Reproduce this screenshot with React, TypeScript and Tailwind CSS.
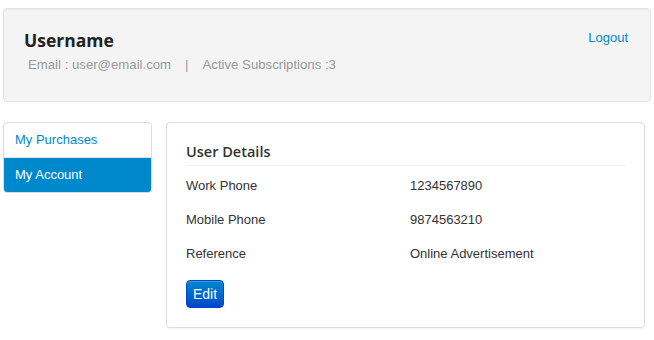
export default function App() {
  const rows = [
    { label: "Work Phone", value: "1234567890" },
    { label: "Mobile Phone", value: "9874563210" },
    { label: "Reference", value: "Online Advertisement" },
  ];

  return (
    <div className="min-h-[340px] bg-white px-[3px] pt-[8px] text-[13px] text-[#333] font-['Liberation_Sans',Arial,sans-serif]">
      <div className="flex h-[94px] items-start justify-between rounded-[4px] border border-[#e3e3e3] bg-[#f4f4f4] pl-[20px] pr-[22px] pt-[19px] shadow-[inset_0_1px_1px_rgba(0,0,0,0.05)]">
        <div>
          <h2 className="font-['Open_Sans',sans-serif] text-[17.5px] font-bold leading-[24px] text-[#222]">
            Username
          </h2>
          <p className="mt-[4px] pl-[4px] text-[13.2px] leading-[18px] text-[#999]">
            Email : user@email.com<span className="px-[14px]">|</span>Active Subscriptions :3
          </p>
        </div>
        <a href="#" className="mt-[0px] text-[13px] text-[#0088cc]">
          Logout
        </a>
      </div>

      <div className="mt-[20px] flex items-start gap-[14px]">
        <ul className="w-[149px] overflow-hidden rounded-[4px] border border-[#ddd] bg-white">
          <li className="flex h-[35px] items-center border-b border-[#e5e5e5] pl-[11px] text-[#0088cc]">
            My Purchases
          </li>
          <li className="flex h-[34px] items-center bg-[#0088cc] pl-[11px] text-white">
            My Account
          </li>
        </ul>

        <div className="mr-[6px] flex-1 rounded-[4px] border border-[#ddd] bg-white px-[19px] pb-[19px] pt-[19px] shadow-[0_1px_2px_rgba(0,0,0,0.05)]">
          <h3 className="border-b border-[#eee] pb-[3px] font-['Open_Sans',sans-serif] text-[14.5px] font-semibold leading-[20px] text-[#333]">
            User Details
          </h3>
          <div className="mt-[3px]">
            {rows.map((r) => (
              <div key={r.label} className="grid h-[34px] grid-cols-[224px_1fr] items-center">
                <span>{r.label}</span>
                <span>{r.value}</span>
              </div>
            ))}
          </div>
          <button className="mt-[9px] h-[28px] rounded-[4px] border border-[#0044cc] bg-gradient-to-b from-[#0088cc] to-[#0044cc] px-[6px] text-[14px] text-white shadow-[inset_0_1px_0_rgba(255,255,255,0.2)]">
            Edit
          </button>
        </div>
      </div>
    </div>
  );
}
